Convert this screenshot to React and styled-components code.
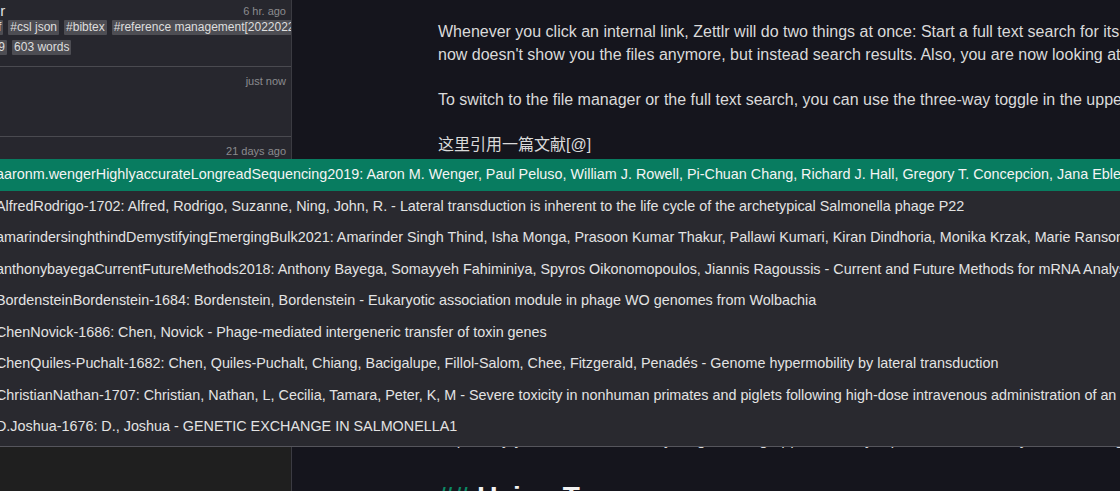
import styled, { createGlobalStyle } from 'styled-components';

const GlobalStyle = createGlobalStyle`
  html, body {
    margin: 0;
    padding: 0;
    background: #15151d;
    overflow: hidden;
  }
  body {
    font-family: "Liberation Sans", "Noto Sans CJK SC", Arial, sans-serif;
  }
`;

const Window = styled.div`
  position: relative;
  display: flex;
  width: 1120px;
  height: 491px;
  overflow: hidden;
`;

// ---- sidebar (file list) ----
const Sidebar = styled.aside`
  flex: 0 0 291px;
  width: 291px;
  background: #1f1f1f;
  border-right: 1px solid #3b3b42;
  overflow: hidden;
`;

const FileList = styled.div`
  margin-top: -3px;
`;

const FileItem = styled.div`
  height: 70px;
  box-sizing: border-box;
  background: #27272e;
  border-bottom: 1px solid #4a4a50;
  padding-top: 6px;
  overflow: hidden;
`;

const Header = styled.div`
  display: flex;
  justify-content: space-between;
  align-items: center;
  height: 15px;
  padding-right: 5px;
`;

const Title = styled.span`
  margin-left: ${(p) => -p.$shift}px;
  font-size: 15px;
  color: #e2e2e2;
  white-space: nowrap;
`;

const Date = styled.span`
  font-size: 11px;
  color: #8b8b8f;
  white-space: nowrap;
`;

const TagRow = styled.div`
  display: flex;
  gap: 5px;
  margin-top: ${(p) => p.$gap}px;
  margin-left: ${(p) => -p.$shift}px;
  white-space: nowrap;
`;

const Tag = styled.span`
  flex: none;
  font-size: 12px;
  line-height: 13px;
  padding: 1px 2px;
  background: #4d4d53;
  color: #dedede;
  border-radius: 1px;
`;

// ---- editor ----
const Editor = styled.main`
  flex: 1;
  background: #15151d;
  padding: 21px 0 0 146px;
  overflow: hidden;
  color: #dadada;
  font-size: 16px;
`;

const Line = styled.div`
  height: 22.7px;
  line-height: 22.7px;
  white-space: nowrap;
`;

const Heading = styled.div`
  margin-top: 5px;
  font-size: 28px;
  line-height: 34px;
  font-weight: bold;
  white-space: nowrap;
  color: #f2f2f2;
`;

const Hashes = styled.span`
  color: #0b8a66;
  margin-right: 8px;
`;

// ---- autocomplete popup ----
const Popup = styled.ul`
  position: absolute;
  top: 159px;
  left: -8px;
  width: 1400px;
  margin: 0;
  padding: 0 0 3px;
  list-style: none;
  background: #29292f;
  border-bottom: 1px solid #55555c;
`;

const Option = styled.li`
  height: 31.5px;
  line-height: 31.5px;
  padding-left: 4px;
  font-size: 14.36px;
  white-space: nowrap;
  color: ${(p) => (p.$active ? '#f4f4f4' : '#e3e3e3')};
  background: ${(p) => (p.$active ? '#087c60' : 'transparent')};
`;

const options = [
  'aaronm.wengerHighlyaccurateLongreadSequencing2019: Aaron M. Wenger, Paul Peluso, William J. Rowell, Pi-Chuan Chang, Richard J. Hall, Gregory T. Concepcion, Jana Ebler, Arkarachai Fungtammasan - Accurate circular consensus long-read sequencing',
  'AlfredRodrigo-1702: Alfred, Rodrigo, Suzanne, Ning, John, R. - Lateral transduction is inherent to the life cycle of the archetypical Salmonella phage P22',
  'amarindersinghthindDemystifyingEmergingBulk2021: Amarinder Singh Thind, Isha Monga, Prasoon Kumar Thakur, Pallawi Kumari, Kiran Dindhoria, Monika Krzak, Marie Ranson, Ben Crossett',
  'anthonybayegaCurrentFutureMethods2018: Anthony Bayega, Somayyeh Fahiminiya, Spyros Oikonomopoulos, Jiannis Ragoussis - Current and Future Methods for mRNA Analysis: A Drive Toward Single Molecule Sequencing',
  'BordensteinBordenstein-1684: Bordenstein, Bordenstein - Eukaryotic association module in phage WO genomes from Wolbachia',
  'ChenNovick-1686: Chen, Novick - Phage-mediated intergeneric transfer of toxin genes',
  'ChenQuiles-Puchalt-1682: Chen, Quiles-Puchalt, Chiang, Bacigalupe, Fillol-Salom, Chee, Fitzgerald, Penadés - Genome hypermobility by lateral transduction',
  'ChristianNathan-1707: Christian, Nathan, L, Cecilia, Tamara, Peter, K, M - Severe toxicity in nonhuman primates and piglets following high-dose intravenous administration of an adeno-associated virus vector',
  'D.Joshua-1676: D., Joshua - GENETIC EXCHANGE IN SALMONELLA1',
];

const editorLines = [
  'Whenever you click an internal link, Zettlr will do two things at once: Start a full text search for its contents, and open the file',
  "now doesn't show you the files anymore, but instead search results. Also, you are now looking at the search results for that link.",
  '',
  'To switch to the file manager or the full text search, you can use the three-way toggle in the upper left corner of the window.',
  '',
  '这里引用一篇文献[@]',
  '',
  'Links are a powerful way to connect your notes with each other, and they work across all of your workspaces.',
  '',
  'Zettlr also supports tags, which you can add anywhere in your file by typing a hashtag followed by a word.',
  '',
  'Clicking a tag will also start a search, and the tag cloud shows you every tag that is in use right now.',
  '',
  'You can also use the related files panel to discover notes that share links or tags with the open one.',
  '',
  'The graph view gives you a visual overview of how all of your notes connect with one another.',
  '',
  '',
  'Especially you will find that every single linking approach stays quite flexible while you are writing along.',
  '',
];

export default function App() {
  return (
    <>
      <GlobalStyle />
      <Window>
        <Sidebar>
          <FileList>
            <FileItem>
              <Header>
                <Title $shift={29}>Zettlr</Title>
                <Date>6 hr. ago</Date>
              </Header>
              <TagRow $gap={2} $shift={24}>
                <Tag>#pdf</Tag>
                <Tag>#csl json</Tag>
                <Tag>#bibtex</Tag>
                <Tag>#reference management[20220220131649]</Tag>
              </TagRow>
              <TagRow $gap={5} $shift={27}>
                <Tag>4,109</Tag>
                <Tag>603 words</Tag>
              </TagRow>
            </FileItem>
            <FileItem>
              <Header>
                <Title $shift={200}>Untitled</Title>
                <Date>just now</Date>
              </Header>
            </FileItem>
            <FileItem>
              <Header>
                <Title $shift={200}>Citations</Title>
                <Date>21 days ago</Date>
              </Header>
            </FileItem>
            <FileItem />
          </FileList>
        </Sidebar>

        <Editor>
          {editorLines.map((text, i) => (
            <Line key={i}>{text}</Line>
          ))}
          <Heading>
            <Hashes>##</Hashes>Using Tags
          </Heading>
        </Editor>

        <Popup>
          {options.map((text, i) => (
            <Option key={i} $active={i === 0}>
              {text}
            </Option>
          ))}
        </Popup>
      </Window>
    </>
  );
}
